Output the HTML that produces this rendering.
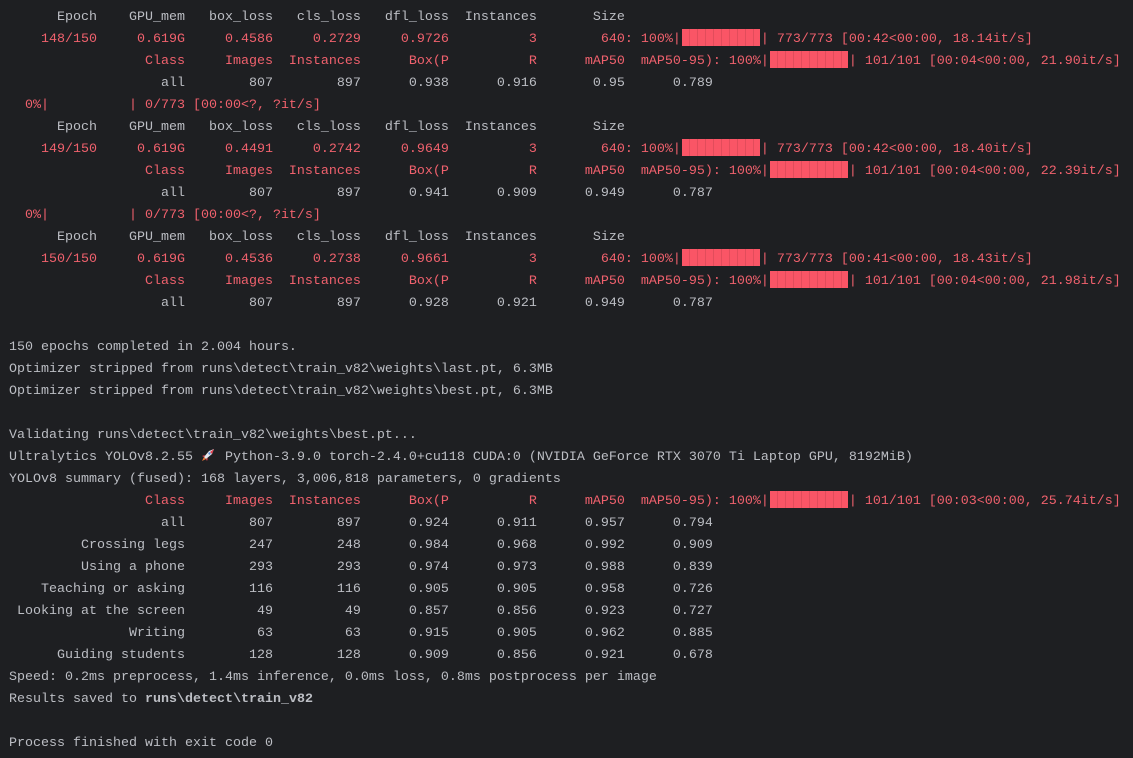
<!DOCTYPE html>
<html><head><meta charset="utf-8"><style>
html,body{margin:0;padding:0;background:#1e1f22;width:1133px;height:758px;overflow:hidden}
#t{position:absolute;left:9px;top:7px;font-family:"Liberation Mono",monospace;font-size:13.33px;color:#bcbec4}
.l{height:22px;line-height:22px;white-space:pre}
.r{color:#f0616d}
.b{display:inline-block;width:78px;height:17px;vertical-align:-4px;margin:0 1px;background:repeating-linear-gradient(90deg,#fa5566 0,#fa5566 7px,#e24c5b 7px,#e24c5b 8px)}
.rk{display:inline-block;width:16px;height:14px;vertical-align:-2px}
b{font-weight:bold}
</style></head><body><div id="t">
<div class="l">      Epoch    GPU_mem   box_loss   cls_loss   dfl_loss  Instances       Size</div>
<div class="l r">    148/150     0.619G     0.4586     0.2729     0.9726          3        640: 100%|<span class="b"></span>| 773/773 [00:42&lt;00:00, 18.14it/s]</div>
<div class="l r">                 Class     Images  Instances      Box(P          R      mAP50  mAP50-95): 100%|<span class="b"></span>| 101/101 [00:04&lt;00:00, 21.90it/s]</div>
<div class="l">                   all        807        897      0.938      0.916       0.95      0.789</div>
<div class="l r">  0%|          | 0/773 [00:00&lt;?, ?it/s]</div>
<div class="l">      Epoch    GPU_mem   box_loss   cls_loss   dfl_loss  Instances       Size</div>
<div class="l r">    149/150     0.619G     0.4491     0.2742     0.9649          3        640: 100%|<span class="b"></span>| 773/773 [00:42&lt;00:00, 18.40it/s]</div>
<div class="l r">                 Class     Images  Instances      Box(P          R      mAP50  mAP50-95): 100%|<span class="b"></span>| 101/101 [00:04&lt;00:00, 22.39it/s]</div>
<div class="l">                   all        807        897      0.941      0.909      0.949      0.787</div>
<div class="l r">  0%|          | 0/773 [00:00&lt;?, ?it/s]</div>
<div class="l">      Epoch    GPU_mem   box_loss   cls_loss   dfl_loss  Instances       Size</div>
<div class="l r">    150/150     0.619G     0.4536     0.2738     0.9661          3        640: 100%|<span class="b"></span>| 773/773 [00:41&lt;00:00, 18.43it/s]</div>
<div class="l r">                 Class     Images  Instances      Box(P          R      mAP50  mAP50-95): 100%|<span class="b"></span>| 101/101 [00:04&lt;00:00, 21.98it/s]</div>
<div class="l">                   all        807        897      0.928      0.921      0.949      0.787</div>
<div class="l"> </div>
<div class="l">150 epochs completed in 2.004 hours.</div>
<div class="l">Optimizer stripped from runs\detect\train_v82\weights\last.pt, 6.3MB</div>
<div class="l">Optimizer stripped from runs\detect\train_v82\weights\best.pt, 6.3MB</div>
<div class="l"> </div>
<div class="l">Validating runs\detect\train_v82\weights\best.pt...</div>
<div class="l">Ultralytics YOLOv8.2.55 <svg class="rk" viewBox="0 0 16 14"><path d="M13 1 L8 3 L3 9 L5 11 L11 6 Z" fill="#e8e8ee"/><path d="M13 1 L11 6 L9 4 Z" fill="#e0404f"/><circle cx="8.5" cy="5.5" r="1.2" fill="#5b8fd6"/><path d="M3 9 L1 13 L5 11 Z" fill="#f07a3a"/><path d="M4 7 L1 8 L3 9 Z M7 10 L6 13 L5 11 Z" fill="#e0404f"/></svg> Python-3.9.0 torch-2.4.0+cu118 CUDA:0 (NVIDIA GeForce RTX 3070 Ti Laptop GPU, 8192MiB)</div>
<div class="l">YOLOv8 summary (fused): 168 layers, 3,006,818 parameters, 0 gradients</div>
<div class="l r">                 Class     Images  Instances      Box(P          R      mAP50  mAP50-95): 100%|<span class="b"></span>| 101/101 [00:03&lt;00:00, 25.74it/s]</div>
<div class="l">                   all        807        897      0.924      0.911      0.957      0.794</div>
<div class="l">         Crossing legs        247        248      0.984      0.968      0.992      0.909</div>
<div class="l">         Using a phone        293        293      0.974      0.973      0.988      0.839</div>
<div class="l">    Teaching or asking        116        116      0.905      0.905      0.958      0.726</div>
<div class="l"> Looking at the screen         49         49      0.857      0.856      0.923      0.727</div>
<div class="l">               Writing         63         63      0.915      0.905      0.962      0.885</div>
<div class="l">      Guiding students        128        128      0.909      0.856      0.921      0.678</div>
<div class="l">Speed: 0.2ms preprocess, 1.4ms inference, 0.0ms loss, 0.8ms postprocess per image</div>
<div class="l">Results saved to <b>runs\detect\train_v82</b></div>
<div class="l"> </div>
<div class="l">Process finished with exit code 0</div>
</div></body></html>
